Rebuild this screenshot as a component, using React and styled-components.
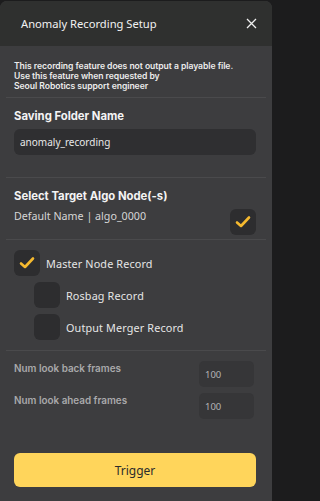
import styled, { createGlobalStyle } from "styled-components";

const GlobalStyle = createGlobalStyle`
  html, body {
    margin: 0;
    padding: 0;
    background: #1c1c1d;
  }
  body {
    font-family: "Noto Sans", "Open Sans", sans-serif;
  }
`;

const Check = () => (
  <svg width="16" height="14" viewBox="0 0 16 14">
    <path d="M2 7.5 L6 11 L14 2.5" fill="none" stroke="#f5b92f" strokeWidth="2.6" strokeLinecap="round" strokeLinejoin="round" />
  </svg>
);

const App = () => {
  return (
    <>
      <GlobalStyle />
      <Modal>
        <Header>
          <Title>Anomaly Recording Setup</Title>
          <Close>
            <svg width="11" height="11" viewBox="0 0 11 11">
              <path d="M1 1 L10 10 M10 1 L1 10" stroke="#f0f0f0" strokeWidth="1.3" />
            </svg>
          </Close>
        </Header>
        <Body>
          <Notice>
            This recording feature does not output a playable file.
            <br />
            Use this feature when requested by
            <br />
            Seoul Robotics support engineer
          </Notice>
          <Divider />
          <Section>
            <Heading>Saving Folder Name</Heading>
            <TextInput defaultValue="anomaly_recording" />
          </Section>
          <Divider />
          <Section $tight>
            <Heading>Select Target Algo Node(-s)</Heading>
            <NodeRow>
              <NodeName>Default Name | algo_0000</NodeName>
              <Box>
                <Check />
              </Box>
            </NodeRow>
          </Section>
          <Divider />
          <Options>
            <Option>
              <Box>
                <Check />
              </Box>
              <OptionLabel>Master Node Record</OptionLabel>
            </Option>
            <Option $indent>
              <Box />
              <OptionLabel>Rosbag Record</OptionLabel>
            </Option>
            <Option $indent>
              <Box />
              <OptionLabel>Output Merger Record</OptionLabel>
            </Option>
          </Options>
          <Divider />
          <Frames>
            <FrameRow>
              <FrameLabel>Num look back frames</FrameLabel>
              <NumInput defaultValue="100" />
            </FrameRow>
            <FrameRow>
              <FrameLabel>Num look ahead frames</FrameLabel>
              <NumInput defaultValue="100" />
            </FrameRow>
          </Frames>
          <Trigger>Trigger</Trigger>
        </Body>
      </Modal>
    </>
  );
};

const Modal = styled.div`
  margin-top: 1px;
  width: 272px;
  height: 500px;
  background: #3d3d3f;
  border-radius: 7px 7px 0 0;
  overflow: hidden;
  display: flex;
  flex-direction: column;
`;

const Header = styled.div`
  height: 45px;
  background: #2f302f;
  display: flex;
  align-items: center;
  justify-content: space-between;
  padding: 0 15px 0 21px;
  box-sizing: border-box;
  flex-shrink: 0;
`;

const Title = styled.div`
  color: #f2f2f2;
  font-size: 11.2px;
`;

const Close = styled.div`
  display: flex;
`;

const Body = styled.div`
  display: flex;
  flex-direction: column;
  padding: 0 6px;
  flex: 1;
`;

const Notice = styled.div`
  color: #ececec;
  font-family: "Inter", "Liberation Sans", sans-serif;
  font-weight: 600;
  font-size: 8.6px;
  line-height: 10px;
  padding: 15px 8px 6px;
  letter-spacing: -0.05px;
  white-space: nowrap;
`;

const Divider = styled.div`
  height: 1px;
  background: #4a4a4c;
`;

const Section = styled.div`
  padding: 10px 10px ${(p) => (p.$tight ? "4px" : "22px")} 8px;
  display: flex;
  flex-direction: column;
  gap: 5px;
`;

const Heading = styled.div`
  color: #f4f4f4;
  font-family: "Inter", "Liberation Sans", sans-serif;
  font-weight: 700;
  font-size: 11.3px;
  line-height: 16px;
`;

const TextInput = styled.input`
  height: 26px;
  box-sizing: border-box;
  border: none;
  border-radius: 6px;
  background: #2f2f31;
  color: #e8e8e8;
  font-family: "Noto Sans", sans-serif;
  font-size: 10px;
  padding: 0 6px;
  outline: none;
`;

const NodeRow = styled.div`
  display: flex;
  justify-content: space-between;
  align-items: flex-start;
`;

const NodeName = styled.div`
  color: #d6d6d6;
  font-size: 10.7px;
  line-height: 14px;
`;

const Box = styled.div`
  width: 26px;
  height: 26px;
  border-radius: 6px;
  background: #2d2d2f;
  display: flex;
  align-items: center;
  justify-content: center;
  flex-shrink: 0;
`;

const Options = styled.div`
  display: flex;
  flex-direction: column;
  gap: 6px;
  padding: 10px 8px;
`;

const Option = styled.div`
  display: flex;
  align-items: center;
  gap: 6px;
  padding-left: ${(p) => (p.$indent ? "20px" : "0")};
`;

const OptionLabel = styled.div`
  color: #e6e6e6;
  font-size: 10.8px;
  letter-spacing: 0.15px;
`;

const Frames = styled.div`
  display: flex;
  flex-direction: column;
  gap: 6px;
  padding: 10px 12px 0 8px;
`;

const FrameRow = styled.div`
  display: flex;
  justify-content: space-between;
  align-items: flex-start;
`;

const FrameLabel = styled.div`
  color: #a9a9ab;
  font-family: "Inter", "Liberation Sans", sans-serif;
  font-weight: 600;
  font-size: 9.9px;
  line-height: 12px;
  margin-top: 1px;
`;

const NumInput = styled.input`
  width: 55px;
  height: 26px;
  box-sizing: border-box;
  border: none;
  border-radius: 5px;
  background: #363638;
  color: #b4b4b6;
  font-family: "Noto Sans", sans-serif;
  font-size: 9.5px;
  padding: 0 6px;
  outline: none;
`;

const Trigger = styled.button`
  margin: 34px 10px 0 8px;
  height: 34px;
  border: none;
  border-radius: 6px;
  background: #ffd55b;
  color: #2b2b2b;
  font-family: "Noto Sans", sans-serif;
  font-size: 12px;
  cursor: pointer;
`;

export default App;
